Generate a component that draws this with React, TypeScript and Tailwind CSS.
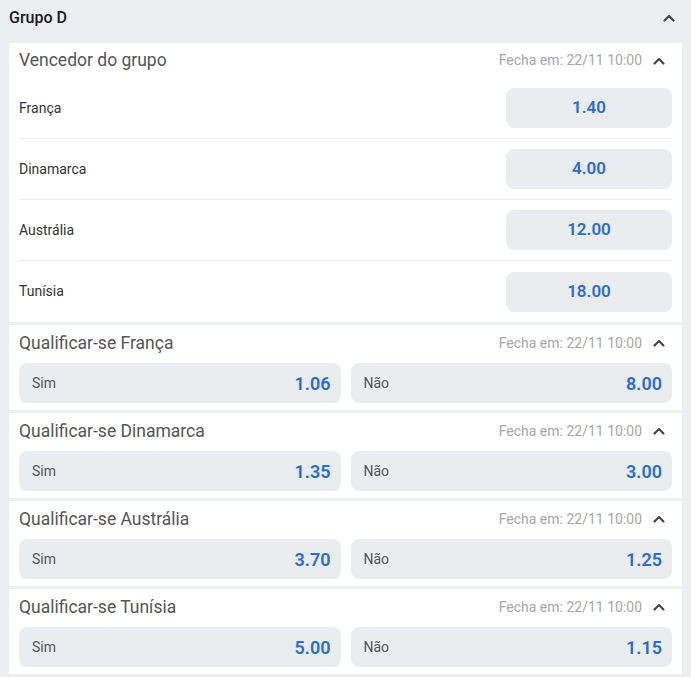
import React from "react";

const winners = [
  { name: "França", odd: "1.40" },
  { name: "Dinamarca", odd: "4.00" },
  { name: "Austrália", odd: "12.00" },
  { name: "Tunísia", odd: "18.00" },
];

const qualify = [
  { team: "França", sim: "1.06", nao: "8.00" },
  { team: "Dinamarca", sim: "1.35", nao: "3.00" },
  { team: "Austrália", sim: "3.70", nao: "1.25" },
  { team: "Tunísia", sim: "5.00", nao: "1.15" },
];

function ChevronUp({ className = "" }: { className?: string }) {
  return (
    <svg width="14" height="14" viewBox="0 0 14 14" className={className}>
      <polyline
        points="2.5,9.5 7,5 11.5,9.5"
        fill="none"
        stroke="currentColor"
        strokeWidth="2.2"
        strokeLinecap="round"
        strokeLinejoin="round"
      />
    </svg>
  );
}

function MarketHeader({ title }: { title: string }) {
  return (
    <div className="flex items-center justify-between pl-[10px] pr-[16px]">
      <span className="text-[17.5px] text-[#555]">{title}</span>
      <div className="flex items-center gap-[10px]">
        <span className="text-[14px] text-[#a6a6a6]">Fecha em: 22/11 10:00</span>
        <ChevronUp className="text-[#444]" />
      </div>
    </div>
  );
}

export default function App() {
  return (
    <div
      className="w-[691px] h-[677px] bg-[#eceef1] overflow-hidden"
      style={{ fontFamily: "Roboto, 'Liberation Sans', sans-serif" }}
    >
      {/* Group header */}
      <div className="h-[36px] flex items-center justify-between pl-[9px] pr-[15px]">
        <h1 className="text-[16px] font-medium text-[#1a1a1a]">Grupo D</h1>
        <ChevronUp className="text-[#444]" />
      </div>

      <div className="mt-[7px] ml-[9px] w-[673px] flex flex-col gap-[3px]">
        {/* Group winner */}
        <div className="bg-white">
          <div className="h-[35px] flex flex-col justify-center">
            <MarketHeader title="Vencedor do grupo" />
          </div>
          <div className="px-[10px]">
            {winners.map((w, i) => (
              <div
                key={w.name}
                className={`h-[61px] flex items-center justify-between ${
                  i < winners.length - 1 ? "border-b border-[#eceef0]" : ""
                }`}
              >
                <span className="text-[14px] text-[#333]">{w.name}</span>
                <button className="w-[166px] h-[40px] rounded-[8px] bg-[#eaedf0] text-[17px] font-semibold text-[#2b6cd2]">
                  {w.odd}
                </button>
              </div>
            ))}
          </div>
        </div>

        {/* Qualify markets */}
        {qualify.map((q) => (
          <div key={q.team} className="bg-white h-[85px]">
            <div className="h-[36px] flex flex-col justify-center">
              <MarketHeader title={`Qualificar-se ${q.team}`} />
            </div>
            <div className="mt-[2px] px-[10px] grid grid-cols-2 gap-[10px]">
              {[
                { label: "Sim", odd: q.sim },
                { label: "Não", odd: q.nao },
              ].map((o) => (
                <button
                  key={o.label}
                  className="h-[40px] rounded-[8px] bg-[#eaedf0] flex items-center justify-between pl-[13px] pr-[10px]"
                >
                  <span className="text-[14px] text-[#555]">{o.label}</span>
                  <span className="text-[18px] font-semibold text-[#2b6cd2]">{o.odd}</span>
                </button>
              ))}
            </div>
          </div>
        ))}
      </div>
    </div>
  );
}
